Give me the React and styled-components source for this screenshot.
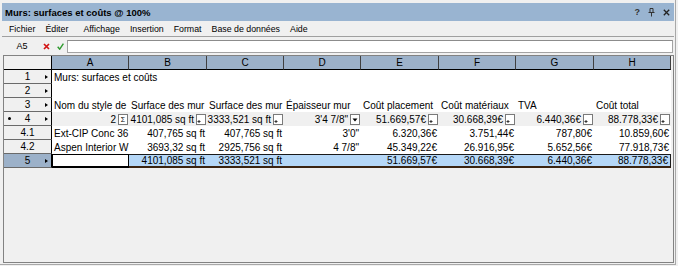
import React from 'react';
import styled, { createGlobalStyle } from 'styled-components';

const GlobalStyle = createGlobalStyle`
  html, body { margin: 0; padding: 0; background: #f0f0f0; }
  body { font-family: "Liberation Sans", Arial, sans-serif; color: #000; }
`;

const Window = styled.div`
  width: 676px;
  height: 265px;
  box-sizing: border-box;
  padding: 3px 1px 1px 2px;
  border-right: 1px solid #a8a8a8;
  border-bottom: 1px solid #a8a8a8;
  display: flex;
  flex-direction: column;
  background: #f0f0f0;
`;

const TitleBar = styled.div`
  height: 18px;
  flex: none;
  display: flex;
  align-items: center;
  padding: 0 4px 0 3px;
  background: #99b4d1;
  font-size: 9.5px;
  font-weight: bold;
`;

const Title = styled.span`
  flex: 1;
`;

const TitleTools = styled.div`
  display: flex;
  align-items: center;
  gap: 8px;
  color: #333;
`;

const Help = styled.span`
  font-size: 9px;
  font-weight: bold;
  line-height: 9px;
`;

const MenuBar = styled.div`
  height: 15px;
  flex: none;
  display: flex;
  align-items: center;
  gap: 10px;
  padding-left: 7px;
  border-bottom: 1px solid #a0a0a0;
  font-size: 8.8px;
`;

const MenuItem = styled.span`
  margin-left: ${p => (p.$wide ? '5px' : '0')};
`;

const FormulaBar = styled.div`
  height: 18px;
  flex: none;
  display: flex;
  align-items: center;
  padding: 0 1px 0 2px;
`;

const CellRef = styled.span`
  width: 36px;
  text-align: center;
  font-size: 9px;
`;

const Action = styled.svg`
  flex: none;
  margin-left: ${p => p.$gap}px;
`;

const FormulaInput = styled.div`
  flex: 1;
  height: 13px;
  margin-left: 3px;
  box-sizing: border-box;
  background: #fff;
  border: 1px solid #a3a3a3;
  border-top-color: #8c8c8c;
`;

const Sheet = styled.div`
  flex: 1;
  margin-left: 1px;
  border: 1px solid #828282;
  background: #f0f0f0;
  display: grid;
  grid-template-columns: 48px 77px 78px 77px 77px 78px 77px 78px 77px;
  grid-auto-rows: 14px;
  align-content: start;
  overflow: hidden;
  font-size: 10px;
`;

const Corner = styled.div`
  background: #f0f0f0;
  border-right: 1px solid #000;
  border-bottom: 1px solid #000;
`;

const ColHead = styled.div`
  background: #9cb1c9;
  border-right: 1px solid #404040;
  border-bottom: 1px solid #000;
  text-align: center;
  line-height: 13px;
`;

const RowHead = styled.div`
  box-sizing: border-box;
  display: grid;
  grid-template-columns: 12px 1fr 12px;
  align-items: center;
  background: ${p => (p.$sel ? '#9cb1c9' : '#f0f0f0')};
  border-right: 1px solid #000;
  border-bottom: 1px solid #6a6a6a;
  line-height: 13px;
`;

const Bullet = styled.span`
  justify-self: start;
  margin-left: 4px;
  width: 3px;
  height: 3px;
  border-radius: 50%;
  background: #000;
`;

const RowLabel = styled.span`
  text-align: center;
`;

const Arrow = styled.span`
  justify-self: end;
  margin-right: 3px;
  width: 0;
  height: 0;
  border-top: 2.5px solid transparent;
  border-bottom: 2.5px solid transparent;
  border-left: 3px solid #000;
`;

const tones = {
  plain: 'background: #fff;',
  sum: 'background: #f0f0f0;',
  sel: 'background: #b5d7f7; border-top: 1px solid #1a1a1a; border-bottom: 2px solid #3b2411;',
  active: 'background: #fff; border: 1px solid #000; border-bottom-width: 2px;',
};

const Cell = styled.div`
  box-sizing: border-box;
  grid-column: span ${p => p.$span || 1};
  padding: ${p => (p.$tone === 'sel' || p.$tone === 'active' ? '0 2px' : '1px 2px 0')};
  line-height: ${p => (p.$tone === 'sel' || p.$tone === 'active' ? '11px' : '13px')};
  white-space: nowrap;
  overflow: hidden;
  text-align: ${p => p.$align || 'left'};
  ${p => tones[p.$tone || 'plain']}
  ${p => (p.$last ? 'border-right: 1px solid #1a1a1a;' : '')}
`;

const SumCell = styled.div`
  display: flex;
  align-items: center;
  justify-content: flex-end;
  gap: 2px;
  padding-right: 1px;
  background: #f0f0f0;
  white-space: nowrap;
  overflow: hidden;
  line-height: 13px;
`;

const SumBox = styled.span`
  flex: none;
  width: 10px;
  height: 11px;
  box-sizing: border-box;
  margin-top: 1px;
  border: 1px solid #7a7a7a;
  background: #fff;
  display: grid;
  place-items: center;
  font-size: 7px;
  line-height: 7px;
`;

const BoxGlyph = ({ kind }) => {
  if (kind === 'sigma') return <SumBox>Σ</SumBox>;
  if (kind === 'drop')
    return (
      <SumBox>
        <svg width="8" height="9" viewBox="0 0 8 9">
          <path d="M1.5 3.5h5l-2.5 3z" fill="#000" />
        </svg>
      </SumBox>
    );
  return (
    <SumBox>
      <svg width="8" height="9" viewBox="0 0 8 9">
        <path d="M0.5 6.5h3M2 5v3" stroke="#333" strokeWidth="1" fill="none" />
      </svg>
    </SumBox>
  );
};

const cols = ['A', 'B', 'C', 'D', 'E', 'F', 'G', 'H'];

const headers = [
  'Nom du style de',
  'Surface des mur',
  'Surface des mur',
  'Épaisseur mur',
  'Coût placement',
  'Coût matériaux',
  'TVA',
  'Coût total',
];

const sums = [
  ['2', 'sigma'],
  ['4101,085 sq ft', 'plus'],
  ['3333,521 sq ft', 'plus'],
  ['3\'4 7/8"', 'drop'],
  ['51.669,57€', 'plus'],
  ['30.668,39€', 'plus'],
  ['6.440,36€', 'plus'],
  ['88.778,33€', 'plus'],
];

const details = [
  ['4.1', ['Ext-CIP Conc 36', '407,765 sq ft', '407,765 sq ft', '3\'0"', '6.320,36€', '3.751,44€', '787,80€', '10.859,60€']],
  ['4.2', ['Aspen Interior W', '3693,32 sq ft', '2925,756 sq ft', '4 7/8"', '45.349,22€', '26.916,95€', '5.652,56€', '77.918,73€']],
];

const totals = ['4101,085 sq ft', '3333,521 sq ft', '', '51.669,57€', '30.668,39€', '6.440,36€', '88.778,33€'];

const Head = ({ label, bullet, arrow, sel }) => (
  <RowHead $sel={sel}>
    {bullet ? <Bullet /> : <span />}
    <RowLabel>{label}</RowLabel>
    {arrow ? <Arrow /> : <span />}
  </RowHead>
);

export default function App() {
  return (
    <>
      <GlobalStyle />
      <Window>
        <TitleBar>
          <Title>Murs: surfaces et coûts @ 100%</Title>
          <TitleTools>
            <Help>?</Help>
            <svg width="7" height="9" viewBox="0 0 7 9">
              <path d="M2 0.5h3v4H2z M0.5 4.5h6 M3.5 4.5v4" stroke="#333" strokeWidth="1" fill="none" />
            </svg>
            <svg width="7" height="7" viewBox="0 0 7 7">
              <path d="M0.8 0.8l5.4 5.4M6.2 0.8l-5.4 5.4" stroke="#222" strokeWidth="1.3" />
            </svg>
          </TitleTools>
        </TitleBar>

        <MenuBar>
          <MenuItem>Fichier</MenuItem>
          <MenuItem>Éditer</MenuItem>
          <MenuItem $wide>Affichage</MenuItem>
          <MenuItem>Insertion</MenuItem>
          <MenuItem>Format</MenuItem>
          <MenuItem>Base de données</MenuItem>
          <MenuItem>Aide</MenuItem>
        </MenuBar>

        <FormulaBar>
          <CellRef>A5</CellRef>
          <Action $gap={3} width="7" height="7" viewBox="0 0 7 7">
            <path d="M1 1l5 5M6 1l-5 5" stroke="#d21414" strokeWidth="1.7" />
          </Action>
          <Action $gap={7} width="7" height="7" viewBox="0 0 7 7">
            <path d="M0.7 3.8l2 2.4L6.4 0.6" stroke="#2e9a2e" strokeWidth="1.4" fill="none" />
          </Action>
          <FormulaInput />
        </FormulaBar>

        <Sheet>
          <Corner />
          {cols.map(c => (
            <ColHead key={c}>{c}</ColHead>
          ))}

          <Head label="1" arrow />
          <Cell $span={8}>Murs: surfaces et coûts</Cell>

          <Head label="2" arrow />
          <Cell $span={8} />

          <Head label="3" arrow />
          {headers.map((h, i) => (
            <Cell key={i}>{h}</Cell>
          ))}

          <Head label="4" bullet arrow />
          {sums.map(([v, kind], i) => (
            <SumCell key={i}>
              <span>{v}</span>
              <BoxGlyph kind={kind} />
            </SumCell>
          ))}

          {details.map(([label, vals]) => (
            <React.Fragment key={label}>
              <Head label={label} />
              {vals.map((v, i) => (
                <Cell key={i} $align={i === 0 ? 'left' : 'right'}>
                  {v}
                </Cell>
              ))}
            </React.Fragment>
          ))}

          <Head label="5" arrow sel />
          <Cell $tone="active" />
          {totals.map((v, i) => (
            <Cell key={i} $tone="sel" $align="right" $last={i === totals.length - 1}>
              {v}
            </Cell>
          ))}
        </Sheet>
      </Window>
    </>
  );
}
